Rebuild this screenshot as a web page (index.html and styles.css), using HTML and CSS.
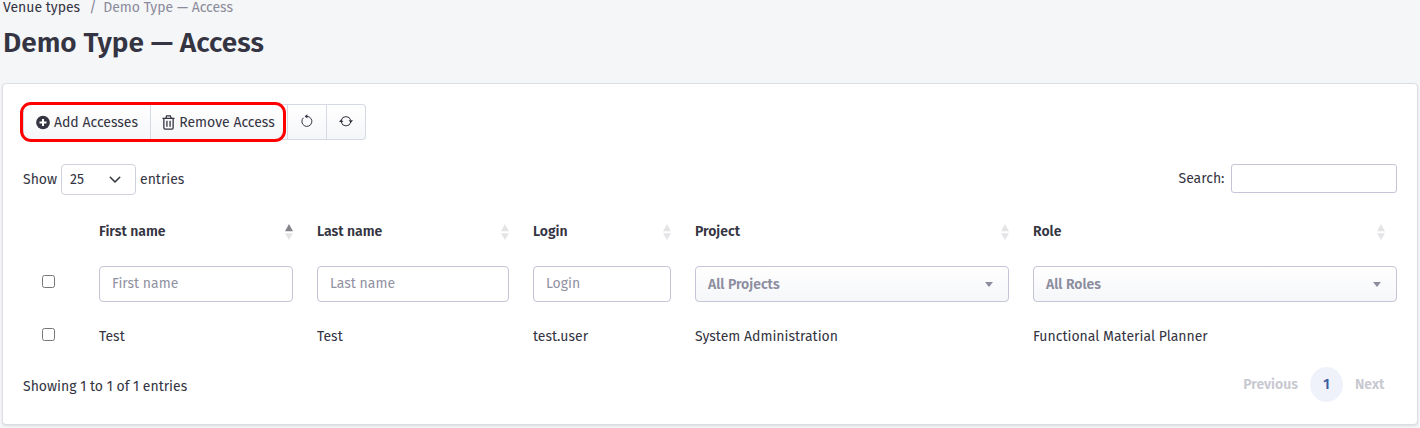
FILE: index.html
```html
<!DOCTYPE html>
<html lang="en">
<head>
<meta charset="utf-8">
<title>Demo Type — Access</title>
<link rel="stylesheet" href="styles.css">
</head>
<body>
<svg class="defs" aria-hidden="true">
  <symbol id="sort" viewBox="0 0 8 16"><path class="up" d="M4 0 8 7.3H0z"/><path class="down" d="M0 9.2h8L4 16z"/></symbol>
</svg>
<nav class="crumbs"><a class="crumb">Venue types</a><span class="slash">/</span><span class="current">Demo Type — Access</span></nav>
<h1 class="title">Demo Type — Access</h1>
<main class="card">
  <div class="toolbar">
    <button class="btn btn-add"><svg class="icon" viewBox="0 0 16 16"><circle cx="8" cy="8" r="7.8" fill="currentColor"/><path d="M8 4v8M4 8h8" stroke="#fff" stroke-width="2.3"/></svg><span>Add Accesses</span></button>
    <button class="btn btn-remove"><svg class="icon" viewBox="0 0 14 16" fill="none" stroke="currentColor" stroke-width="1.4"><path d="M.5 3.5h13M4.2 3.2l.8-2.3h4l.8 2.3M2 3.5v10.2c0 .9.5 1.4 1.4 1.4h7.2c.9 0 1.4-.5 1.4-1.4V3.5M5.3 6v6.5M8.7 6v6.5"/></svg><span>Remove Access</span></button>
    <button class="btn btn-icon" aria-label="Reset"><svg class="glyph" viewBox="0 0 14 14"><path d="M3.4 3.8A5 5 0 1 0 7 2.4" fill="none" stroke="currentColor" stroke-width="1"/><path d="M4.6 2.3 7.4.3v4.1z" fill="currentColor"/></svg></button>
    <button class="btn btn-icon" aria-label="Refresh"><svg class="glyph" viewBox="0 0 14 14"><path d="M2.2 6.5A4.9 4.9 0 0 1 11.8 6.5M11.8 8A4.9 4.9 0 0 1 2.2 8" fill="none" stroke="currentColor" stroke-width="1"/><path d="M9.6 6.3H14L11.8 8.9zM0 7.9h4.4L2.2 5.3z" fill="currentColor"/></svg></button>
    <div class="highlight"></div>
  </div>
  <div class="controls">
    <div class="length"><span class="show">Show</span><div class="select"><span>25</span><svg class="chevron" viewBox="0 0 12 8"><path d="M1.3 1.3 6 6 10.7 1.3" fill="none" stroke="#343a40" stroke-width="1.6" stroke-linecap="round" stroke-linejoin="round"/></svg></div><span class="entries">entries</span></div>
    <label class="search"><span class="search-label">Search:</span><input class="search-input" type="text"></label>
  </div>
  <div class="row head">
    <div></div>
    <div class="th"><span>First name</span><svg class="sort asc"><use href="#sort"/></svg></div>
    <div class="th"><span>Last name</span><svg class="sort"><use href="#sort"/></svg></div>
    <div class="th"><span>Login</span><svg class="sort"><use href="#sort"/></svg></div>
    <div class="th"><span>Project</span><svg class="sort"><use href="#sort"/></svg></div>
    <div class="th last"><span>Role</span><svg class="sort"><use href="#sort"/></svg></div>
  </div>
  <div class="row filters">
    <input class="check" type="checkbox">
    <input class="field" placeholder="First name">
    <input class="field" placeholder="Last name">
    <input class="field" placeholder="Login">
    <div class="combo"><span>All Projects</span><i class="caret"></i></div>
    <div class="combo"><span>All Roles</span><i class="caret"></i></div>
  </div>
  <div class="row data">
    <input class="check" type="checkbox">
    <span>Test</span>
    <span>Test</span>
    <span>test.user</span>
    <span>System Administration</span>
    <span>Functional Material Planner</span>
  </div>
  <div class="footer">
    <span class="info">Showing 1 to 1 of 1 entries</span>
    <div class="pager"><span>Previous</span><span class="page">1</span><span class="next">Next</span></div>
  </div>
</main>
</body>
</html>
```
FILE: styles.css
```css
* { box-sizing: border-box; }
body {
  margin: 0;
  height: 428px;
  overflow: hidden;
  background: #f5f6f8;
  color: #343442;
  font: 14px/20px "Fira Sans", "Noto Sans", sans-serif;
  white-space: nowrap;
}
input, button { font: inherit; color: inherit; }
.defs { display: block; width: 0; height: 0; }
.crumbs { display: flex; height: 20px; margin: -2px 0 0 3px; }
.slash { width: 23px; padding-left: 9px; color: #868699; }
.current { color: #8b8b9b; }
.title {
  margin: 7px 0 0 3px;
  height: 36px;
  font-size: 28px;
  line-height: 36px;
  font-weight: 600;
}
.card {
  margin: 22px 2px 0;
  height: 342px;
  padding: 20px;
  background: #fff;
  border: 1px solid #dddde4;
  border-radius: 4px;
  box-shadow: 0 1px 2px rgba(40, 40, 70, .12);
}
.toolbar { position: relative; display: flex; width: 343px; height: 36px; }
.btn {
  display: flex;
  align-items: center;
  justify-content: center;
  gap: 4px;
  padding: 1px 0 0;
  height: 36px;
  border: 1px solid #d5d9e3;
  border-left-width: 0;
  background: linear-gradient(#fff, #f5f6f9);
}
.btn-add { width: 128px; border-left-width: 1px; border-radius: 4px 0 0 4px; }
.btn-remove { width: 137px; padding-right: 1px; }
.btn-icon { width: 39px; }
.btn-icon:nth-of-type(4) { border-radius: 0 4px 4px 0; }
.icon { width: 14px; height: 15px; margin-top: -1px; }
.btn-remove .icon { width: 13px; }
.glyph { width: 14px; height: 14px; margin-top: -3px; }
.highlight {
  position: absolute;
  left: -3px;
  top: -2px;
  width: 266px;
  height: 40px;
  border: 3px solid #f00;
  border-radius: 11px;
}
.controls { display: flex; justify-content: space-between; height: 31px; margin-top: 24px; }
.length { display: flex; align-items: center; }
.show { width: 38px; }
.select {
  display: flex;
  align-items: center;
  justify-content: space-between;
  width: 75px;
  height: 31px;
  padding: 0 14px 0 8px;
  border: 1px solid #ced2da;
  border-radius: 4px;
}
.chevron { width: 12px; height: 8px; }
.entries { margin-left: 4px; }
.search { display: flex; }
.search-label { width: 52.5px; padding-top: 5px; }
.search-input { width: 166px; height: 29px; border: 1px solid #c6c4d6; border-radius: 3px; }
.row { display: grid; grid-template-columns: 52px 194px 192px 138px 314px 364px; column-gap: 24px; align-items: center; }
.head { height: 20px; margin-top: 27px; font-weight: 600; }
.th { display: flex; justify-content: space-between; align-items: center; }
.last { padding-right: 12px; }
.sort { width: 8px; height: 16px; margin: -1px -.4px 0 0; fill: #e4e4e7; }
.asc { --up: #83838b; }
.up { fill: var(--up, #e4e4e7); }
.filters { height: 36px; margin-top: 24px; }
.check { width: 13px; height: 13px; margin: 0 0 6px 19px; }
.field {
  width: 100%;
  height: 36px;
  padding: 0 12px 2px;
  border: 1px solid #c6c4d6;
  border-radius: 4px;
  background: #fff;
}
.field::placeholder { color: #9192a2; opacity: 1; }
.combo {
  display: flex;
  align-items: center;
  justify-content: space-between;
  height: 36px;
  padding: 1px 15px 0 12px;
  border: 1px solid #c6c4d6;
  border-radius: 4px;
  background: linear-gradient(#fff, #f5f6f9);
  color: #8c8d9e;
  font-weight: 600;
}
.caret { border: 4px solid transparent; border-top: 5px solid #8c8d9e; border-bottom: 0; }
.data { height: 20px; margin-top: 25px; }
.footer { display: flex; justify-content: space-between; height: 37px; margin-top: 19px; }
.info { padding-top: 11px; }
.pager { display: flex; align-items: center; font-weight: 600; color: #c7c8d0; }
.page { display: grid; place-items: center; width: 33px; height: 35px; margin: 0 12px; border-radius: 50%; background: #eff2fa; color: #385c9c; }
.next { width: 30px; margin-right: 12px; }
```
